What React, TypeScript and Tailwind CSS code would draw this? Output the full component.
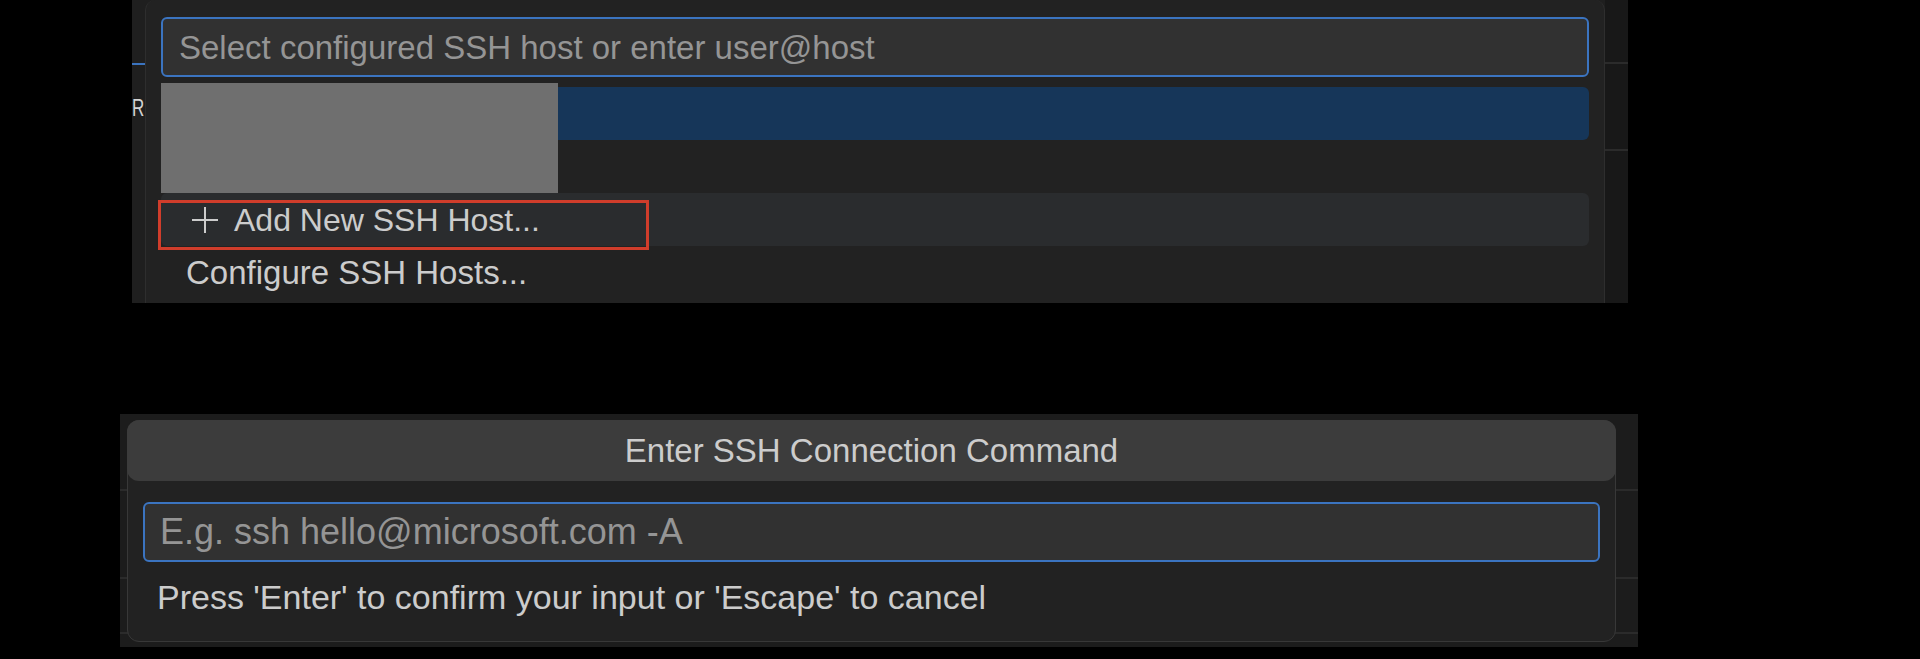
import React from 'react'

const font = "font-['Liberation_Sans','Helvetica','Arial',sans-serif]"

// 上半部分：SSH 主机选择列表
const HostPicker: React.FC = () => {
    return (
        <div className="ml-[132px] w-[1496px] h-[303px] flex bg-[#1f1f1f] overflow-hidden shrink-0">
            <div className="w-[13px] flex flex-col">
                <div className="h-[63px]" />
                <div className="h-[2px] bg-[#3b74c0]" />
                <div className="mt-[31px] text-[17px] leading-[17px] text-[#d4d4d4] scale-y-[1.45] origin-top">R</div>
            </div>

            <div className="w-[1460px] bg-[#222222] rounded-t-[10px] border-x border-[#2e2e2e] px-[15px] pt-[17px] flex flex-col">
                <div className="h-[60px] border-2 border-[#3b74c0] rounded-[6px] bg-[#313131] px-[16px] flex items-center">
                    <span className="text-[33px] text-[#959595] leading-none">Select configured SSH host or enter user@host</span>
                </div>

                <div className="mt-[10px] flex flex-col">
                    <div className="h-[53px] bg-[#163659] rounded-[6px] relative">
                        <div className="absolute left-0 -top-[4px] w-[397px] h-[110px] bg-[#6f6f6f]" />
                    </div>
                    <div className="h-[53px]" />
                    <div className="h-[53px] bg-[#2a2c2e] rounded-[6px] relative flex items-center pl-[30px] gap-[15px] text-[#cccccc]">
                        <svg width="28" height="28" viewBox="0 0 28 28" fill="none" stroke="#cccccc" strokeWidth="2">
                            <line x1="14" y1="1" x2="14" y2="27" />
                            <line x1="1" y1="14" x2="27" y2="14" />
                        </svg>
                        <span className="text-[32px] leading-none">Add New SSH Host...</span>
                        <div className="absolute -left-[3px] top-[7px] w-[491px] h-[50px] border-[3px] border-[#d03d2b]" />
                    </div>
                    <div className="h-[53px] flex items-center pl-[25px] text-[#cccccc]">
                        <span className="text-[33px] leading-none">Configure SSH Hosts...</span>
                    </div>
                </div>
            </div>

            <div className="w-[23px] bg-[#181818] flex flex-col">
                <div className="h-[62px]" />
                <div className="h-[2px] bg-[#2b2b2b]" />
                <div className="h-[85px]" />
                <div className="h-[2px] bg-[#2b2b2b]" />
            </div>
        </div>
    )
}

// 下半部分：输入 SSH 连接命令
const CommandInput: React.FC = () => {
    return (
        <div className="mt-[111px] ml-[120px] w-[1518px] h-[233px] bg-[#1c1c1c] relative overflow-hidden shrink-0 flex">
            <div className="absolute left-0 right-0 top-[75px] h-[2px] bg-[#2b2b2b]" />
            <div className="absolute left-0 right-0 top-[163px] h-[2px] bg-[#2b2b2b]" />
            <div className="absolute left-0 right-0 top-[218px] h-[2px] bg-[#2b2b2b]" />

            <div className="relative ml-[7px] mt-[6px] w-[1489px] h-[222px] rounded-[12px] bg-[#222222] border border-[#383838] flex flex-col">
                <div className="h-[61px] -mx-px -mt-px bg-[#3c3c3c] rounded-[12px] flex items-center justify-center">
                    <span className="text-[33px] leading-none text-[#cccccc]">Enter SSH Connection Command</span>
                </div>
                <div className="mx-[15px] mt-[21px] h-[60px] border-2 border-[#3b74c0] rounded-[6px] bg-[#313131] px-[15px] flex items-center">
                    <span className="text-[36px] leading-none text-[#959595]">E.g. ssh hello@microsoft.com -A</span>
                </div>
                <div className="mt-[18px] pl-[29px]">
                    <span className="text-[34px] leading-none text-[#cccccc]">Press 'Enter' to confirm your input or 'Escape' to cancel</span>
                </div>
            </div>
        </div>
    )
}

export default function App() {
    return (
        <div className={`w-[1920px] h-[659px] bg-black overflow-hidden flex flex-col ${font}`}>
            <HostPicker />
            <CommandInput />
        </div>
    )
}
